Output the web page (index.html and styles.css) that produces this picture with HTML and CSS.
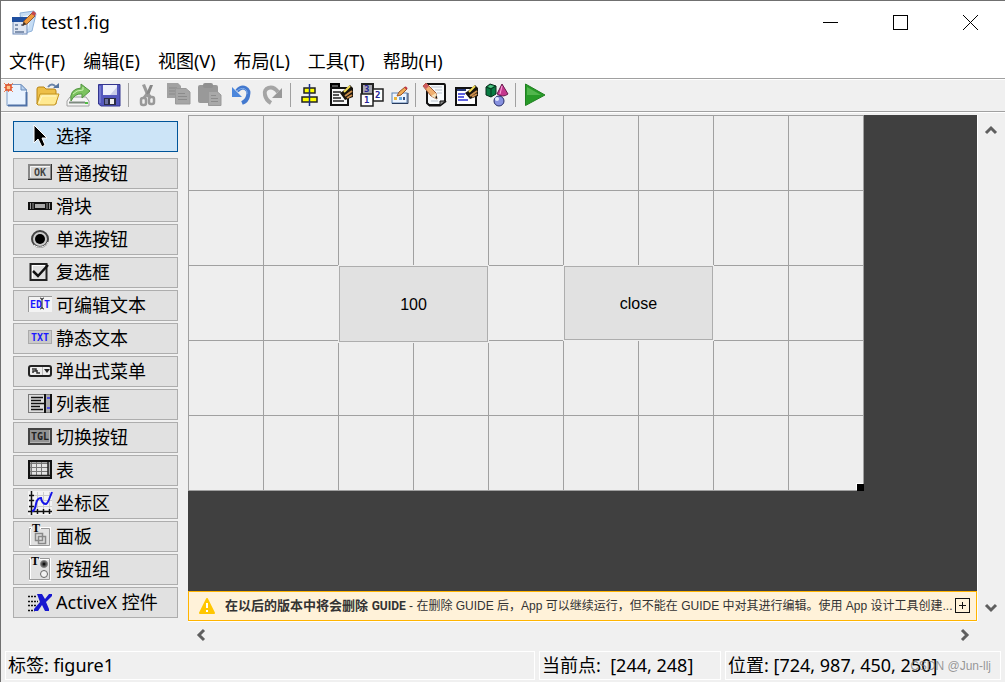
FILE: index.html
```html
<!DOCTYPE html>
<html lang="zh-CN">
<head>
<meta charset="utf-8">
<title>test1.fig</title>
<link rel="stylesheet" href="styles.css">
</head>
<body>
<div class="window">
  <header class="titlebar">
    <svg class="app-icon" width="24" height="24" viewBox="0 0 24 24" aria-hidden="true">
      <path d="M8 2L22 0L24 3L20 20L10 23Z" fill="#c5dcf4" stroke="#8fb2da"/>
      <path d="M11 5L19 4L16 18L10 19Z" fill="#eef6ff"/>
      <rect x="1" y="7" width="14" height="16" fill="#dfe6f2" stroke="#6f8bb8"/>
      <rect x="0" y="6" width="16" height="5" fill="#1f4f9f"/>
      <path d="M3 14H6M3 18H6M9 14H12M3 21H12" stroke="#8294b0" stroke-width="2"/>
      <path d="M11 14L12 10L20 2L23 5L15 13Z" fill="#ef9a3e" stroke="#8d5a35"/>
      <path d="M19 3L21 0L24 2L23 5Z" fill="#c4474d"/>
      <path d="M10 15L12 11L14 13Z" fill="#3b302b"/>
    </svg>
    <h1 class="title">test1.fig</h1>
    <div class="window-controls">
      <button class="window-button" aria-label="最小化"><svg width="15" height="15" viewBox="0 0 15 15"><path d="M0 7.5H15" stroke="#000"/></svg></button>
      <button class="window-button" aria-label="最大化"><svg width="15" height="15" viewBox="0 0 15 15"><rect x=".5" y=".5" width="14" height="14" fill="none" stroke="#000"/></svg></button>
      <button class="window-button" aria-label="关闭"><svg width="15" height="15" viewBox="0 0 15 15"><path d="M0 0L15 15M15 0L0 15" stroke="#000"/></svg></button>
    </div>
  </header>

  <nav class="menubar">
    <button class="menu">文件(F)</button>
    <button class="menu">编辑(E)</button>
    <button class="menu">视图(V)</button>
    <button class="menu">布局(L)</button>
    <button class="menu">工具(T)</button>
    <button class="menu">帮助(H)</button>
  </nav>

  <div class="toolbar" role="toolbar" aria-label="工具栏">
    <div class="tool-group">
      <button class="tool" aria-label="新建"><svg width="24" height="24" viewBox="0 0 24 24">
        <path d="M2 1.500H16L21.500 7V22.500H2Z" fill="#e9f3ff" stroke="#7d9cc6"/><path d="M16 1.500V7H21.500Z" fill="#b9d2f0" stroke="#6d8dba"/>
        <path d="M21.500 9V22.500H3" fill="none" stroke="#4f71a6" stroke-width="2"/>
        <path d="M-1 0L8 9M8 0L-1 9M3.500 0V9M-1 4.500H8" stroke="#ef7d52"/><rect x="1" y="2" width="5" height="5" fill="#ffc48a" stroke="#df4f28" stroke-width="1.500"/></svg></button>
      <button class="tool" aria-label="打开"><svg width="24" height="24" viewBox="0 0 24 24">
        <path d="M1 21V6Q1 4 3 4H8L10 6H18Q20 6 20 8V21Z" fill="#edbf48" stroke="#b98514"/>
        <path d="M1 21L4 11H23L20 20Q19.500 22 18 22H2Z" fill="#ffe991" stroke="#c39320"/>
        <path d="M3 20L6 13H20" fill="none" stroke="#fff7c9"/>
        <path d="M12 4Q16 -1 20 4" fill="none" stroke="#6b86ab" stroke-width="2"/><path d="M17 5H23V0Z" fill="#56759f"/></svg></button>
      <button class="tool" aria-label="导出"><svg width="24" height="24" viewBox="0 0 24 24">
        <path d="M3 14L0 18V23H22V18L19 14Z" fill="#f5f5f5" stroke="#a0a0a0"/><path d="M2 19.500H18" stroke="#7e8b80" stroke-width="2"/><rect x="18" y="19" width="3" height="2" fill="#51bd45"/>
        <path d="M4 18Q2 6 14 5V1L23 8L15 15V11Q8 10 4 18Z" fill="#7cc35f" stroke="#529542"/><path d="M6 11Q9 7 16 7V4" fill="none" stroke="#cdf2b5"/></svg></button>
      <button class="tool" aria-label="保存"><svg width="24" height="24" viewBox="0 0 24 24">
        <path d="M.500 1.500H22V23H3L.500 21Z" fill="#5458bd" stroke="#33358e"/><path d="M2 3V20" stroke="#9298e4"/>
        <rect x="5" y="2" width="14" height="10" fill="#eef0fb"/><path d="M12 12L19 4V12Z" fill="#c8cce9"/>
        <rect x="6" y="15" width="12" height="7" fill="#2b2d45"/><rect x="12" y="16" width="4" height="5" fill="#f1f1f1"/><rect x="7" y="16" width="3" height="5" fill="#6c71a0"/></svg></button>
    </div>
    <div class="tool-group">
      <button class="tool" aria-label="剪切"><svg width="24" height="24" viewBox="0 0 24 24">
        <path d="M6 2L9 1L13 11L11 14Z" fill="#9a9a9a"/><path d="M17 2L14 2L10 11L12 15Z" fill="#878787"/>
        <path d="M11 11L8 15M12 11L15 15" stroke="#9a9a9a" stroke-width="3"/>
        <rect x="5" y="15" width="5" height="7" rx="2" fill="none" stroke="#999" stroke-width="2.500"/><rect x="13" y="14" width="5" height="7" rx="2" fill="none" stroke="#999" stroke-width="2.500"/></svg></button>
      <button class="tool" aria-label="复制"><svg width="24" height="24" viewBox="0 0 24 24">
        <path d="M0 0H11L14 3V15H0Z" fill="#a2a2a2"/><path d="M2 5H10M2 8H9M2 11H8" stroke="#8a8a8a"/>
        <path d="M8.500 5.500H19L23 9V21H8.500Z" fill="#a6a6a6" stroke="#999"/><path d="M11 10.500H18M11 13.500H20M11 16.500H20" stroke="#8c8c8c"/></svg></button>
      <button class="tool" aria-label="粘贴"><svg width="24" height="24" viewBox="0 0 24 24">
        <rect x="0" y="2" width="20" height="18" rx="2" fill="#999"/><rect x="5" y="0" width="10" height="5" rx="2" fill="#909090"/>
        <path d="M10.500 8.500H19L23 12V22.500H10.500Z" fill="#a9a9a9" stroke="#999"/><path d="M13 12.500H18M13 15.500H20M13 18.500H20" stroke="#8c8c8c"/></svg></button>
      <button class="tool" aria-label="撤销"><svg width="24" height="24" viewBox="0 0 24 24">
        <path d="M8 8C14 1 21 6 19 13Q18 18 13 20" fill="none" stroke="#4379cf" stroke-width="4"/><path d="M3 4V14H13Z" fill="#4d87dc"/><path d="M8 8C13 3 19 6 18 11" fill="none" stroke="#83aeea"/></svg></button>
      <button class="tool" aria-label="重做"><svg width="24" height="24" viewBox="0 0 24 24">
        <path d="M18 9C12 1 3 5 5 12Q6 17 11 20" fill="none" stroke="#a5a5a5" stroke-width="4"/><path d="M22 5V15H12Z" fill="#999"/></svg></button>
    </div>
    <div class="tool-group">
      <button class="tool" aria-label="对齐对象"><svg width="24" height="24" viewBox="0 0 24 24">
        <rect x="6" y="5" width="11" height="5" fill="#ff0" stroke="#222" stroke-width="1.500"/><rect x="4" y="14" width="15" height="5" fill="#ff0" stroke="#222" stroke-width="1.500"/><path d="M11.500 1V23" stroke="#142e8c" stroke-width="1.500"/></svg></button>
      <button class="tool" aria-label="菜单编辑器"><svg width="24" height="24" viewBox="0 0 24 24">
        <rect x="2" y="1" width="8" height="4" fill="#555" stroke="#000" stroke-width="2"/><rect x="2" y="5" width="17" height="17" fill="#f8f8f8" stroke="#111" stroke-width="2"/>
        <path d="M4 9H12M4 12H10M4 15H12M4 18H15" stroke="#222" stroke-width="1.500"/>
        <path d="M11 10L14 8L21 2L24 5V14L16 17Z" fill="#17120b"/><path d="M15 9L21 3" stroke="#f4dd58" stroke-width="2"/><path d="M16 13L23 8M18 15L23 12" stroke="#c98d4c" stroke-width="2"/></svg></button>
      <button class="tool" aria-label="Tab 键顺序编辑器"><svg width="24" height="24" viewBox="0 0 24 24">
        <rect x="2" y="1" width="11" height="12" fill="#a8a8b0" stroke="#222" stroke-width="2"/><rect x="13" y="6" width="10" height="12" fill="#fff" stroke="#222" stroke-width="1.500"/><rect x="1" y="11" width="12" height="12" fill="#fff" stroke="#222" stroke-width="1.500"/>
        <text class="digit" x="4" y="9">3</text><text class="digit" x="15" y="15">2</text><text class="digit" x="4" y="20">1</text></svg></button>
      <button class="tool tool-small" aria-label="工具栏编辑器"><svg width="18" height="24" viewBox="0 0 18 24">
        <rect x="1" y="10" width="15" height="10" fill="#edf5ff" stroke="#5c83b3"/><path d="M1 20.500H17V10" fill="none" stroke="#283b5d"/>
        <rect x="3" y="14" width="3" height="3" fill="#eab63b"/><rect x="8" y="14" width="3" height="3" fill="#68aadf"/><rect x="12" y="14" width="2" height="3" fill="#355486"/>
        <path d="M6 13L8 9L14 4L16 6L10 12Z" fill="#f1ad56" stroke="#9b5528"/><path d="M14 4L16 6" stroke="#bf3445" stroke-width="2"/></svg></button>
    </div>
    <div class="tool-group">
      <button class="tool" aria-label="编辑器"><svg width="24" height="24" viewBox="0 0 24 24">
        <path d="M4 1H21Q22 1 22 3V18L17 22H6L4 20Z" fill="#f7fafc" stroke="#111" stroke-width="2"/><path d="M6 22.500H17L23 18" fill="none" stroke="#111" stroke-width="2"/><path d="M17 22V18H22" fill="#888" stroke="#111"/><path d="M8 4H19M12 7H19M14 10H19M8 18H15" stroke="#bbc5cf"/>
        <path d="M0 3L3 0L13 10L14 16L8 13Z" fill="#f0b070" stroke="#a05c3a"/><path d="M0 3L3 0L6 3L3 6Z" fill="#cf5b60"/><path d="M8 13L13 10L14 16Z" fill="#f6e3bd"/><path d="M12 14L14 13V16Z" fill="#111"/></svg></button>
      <button class="tool" aria-label="属性检查器"><svg width="24" height="24" viewBox="0 0 24 24">
        <rect x="2" y="5" width="20" height="17" fill="#fff" stroke="#111" stroke-width="2"/><path d="M3 7H12" stroke="#26387a" stroke-width="2"/>
        <path d="M4 11H11M4 14H10M4 17H14" stroke="#2e32d5" stroke-width="1.500"/>
        <path d="M11 10L14 8L21 2L24 5V13L16 16Z" fill="#17120b"/><path d="M15 9L21 3" stroke="#f4dd58" stroke-width="2"/><path d="M16 13L23 8M18 14L23 11" stroke="#c98d4c" stroke-width="2"/></svg></button>
      <button class="tool" aria-label="对象浏览器"><svg width="24" height="24" viewBox="0 0 24 24">
        <path d="M1 4L5 1L11 3V11L6 14L1 12Z" fill="#087b42" stroke="#092e1d"/><path d="M1 4L6 6L11 3M6 6V14" fill="none" stroke="#07361e"/><path d="M3 4L5 2L9 3L6 5Z" fill="#54c785"/>
        <path d="M17 1L23 11Q18 15 12 11Z" fill="#c5388e" stroke="#66194c"/><path d="M17 3L15 11" stroke="#ffa3dc"/>
        <circle cx="14" cy="18" r="5" fill="#8791df" stroke="#252b69"/><circle cx="12" cy="16" r="2" fill="#e4e8ff"/></svg></button>
    </div>
    <div class="tool-group">
      <button class="tool" aria-label="运行"><svg width="24" height="24" viewBox="0 0 24 24">
        <path d="M2.500 1L22 12L2.500 22.500Z" fill="#279b28" stroke="#218022"/><path d="M4 4L18 12H4Z" fill="#51b64d"/></svg></button>
    </div>
  </div>

  <main class="workspace">
    <aside class="palette" aria-label="组件选项板">
      <button class="component selected" aria-pressed="true"><svg class="component-icon" viewBox="0 0 24 25"><path d="M6 1V19L10 15L14 23L17 21L14 14H19Z" fill="#000" stroke="#fff"/></svg>选择</button>
      <button class="component"><svg class="component-icon" viewBox="0 0 24 25"><rect x="1" y="4" width="22" height="14" fill="#d5d5d5" stroke="#888" stroke-width="2"/><path d="M2.500 16V5.500H22" fill="none" stroke="#f5f5f5"/><path d="M0 18.500H23.500V3" fill="none" stroke="#333"/><text class="icon-label gray" x="6" y="15">OK</text></svg>普通按钮</button>
      <button class="component"><svg class="component-icon" viewBox="0 0 24 25"><rect x="0" y="8" width="24" height="8" fill="#111"/><rect x="7" y="10" width="10" height="4" fill="#aaa"/><path d="M2.500 9V15M5 9V15M19 9V15M21.500 9V15" stroke="#999"/></svg>滑块</button>
      <button class="component"><svg class="component-icon" viewBox="0 0 24 25"><circle cx="12" cy="12" r="8" fill="#ccc" stroke="#444" stroke-width="2"/><path d="M6 18A9 9 0 0 0 20 15" fill="none" stroke="#fff"/><circle cx="12" cy="12" r="5" fill="#000"/></svg>单选按钮</button>
      <button class="component"><svg class="component-icon" viewBox="0 0 24 25"><rect x="2.500" y="4" width="16" height="16" fill="#e0e0e0" stroke="#222" stroke-width="2"/><path d="M4 5.500H17M4.500 6V18" stroke="#fff"/><path d="M5 11L10 16L20 5" fill="none" stroke="#111" stroke-width="2.500"/></svg>复选框</button>
      <button class="component"><svg class="component-icon" viewBox="0 0 24 25"><rect x="0" y="3" width="24" height="16" fill="#f3f3f3"/><path d="M.500 19V3.500H24" fill="none" stroke="#999"/><text class="icon-label blue" x="2" y="15">ED</text><text class="icon-label blue" x="16" y="15">T</text><path d="M12 5Q14 5 14 7V14Q14 16 12 16M16 5Q14 5 14 7M14 14Q14 16 16 16" fill="none" stroke="#222"/></svg>可编辑文本</button>
      <button class="component"><svg class="component-icon" viewBox="0 0 24 25"><rect x=".500" y="4.500" width="23" height="13" fill="#c9c9c9" stroke="#aaa"/><text class="icon-label blue" x="3" y="15">TXT</text></svg>静态文本</button>
      <button class="component"><svg class="component-icon" viewBox="0 0 24 25"><rect x="1" y="7" width="22" height="10" rx="2" fill="#eee" stroke="#222" stroke-width="2"/><path d="M4 10H8V12H5V14M9 11V14H12" fill="none" stroke="#333" stroke-width="1.500"/><path d="M14.500 8V16" stroke="#bbb"/><path d="M16 10H22L19 14Z" fill="#222"/></svg>弹出式菜单</button>
      <button class="component"><svg class="component-icon" viewBox="0 0 24 25"><rect x=".500" y="2.500" width="23" height="18" fill="#ddd" stroke="#777"/><path d="M3 5.500H15M3 8.500H13M3 11.500H16M3 14.500H12M3 17.500H15" stroke="#111" stroke-width="1.500"/><path d="M17 2V21M23 2V21" stroke="#111" stroke-width="2"/><rect x="18" y="3" width="4" height="17" fill="#aaa"/><path d="M19 6H22M19 16H22" stroke="#33e" stroke-width="1.500"/></svg>列表框</button>
      <button class="component"><svg class="component-icon" viewBox="0 0 24 25"><rect x="1" y="4" width="22" height="15" fill="#929292" stroke="#444" stroke-width="2"/><path d="M2 17.500H21.500V5" fill="none" stroke="#b5b5b5"/><text class="icon-label dark" x="3" y="15">TGL</text></svg>切换按钮</button>
      <button class="component"><svg class="component-icon" viewBox="0 0 24 25"><rect x="1" y="3" width="22" height="17" fill="#aaa" stroke="#111" stroke-width="2"/><rect x="3" y="5" width="17" height="12" fill="#e4e4e4"/><path d="M3.500 4V17M8.500 4V17M13.500 4V17M2 5.500H20M2 9.500H20M2 13.500H20" stroke="#777"/><path d="M20 4V18M2 17.500H22" stroke="#222" stroke-width="1.500"/></svg>表</button>
      <button class="component"><svg class="component-icon" viewBox="0 0 24 25"><rect width="24" height="24" fill="#f3f3f3"/><path d="M9.500 1V20M15.500 1V20M21.500 1V20M5 4.500H24M5 9.500H24M5 15.500H24" stroke="#ccc"/><path d="M3.500 0V24M0 20.500H24M1 4.500H6M1 9.500H6M1 15.500H6M9.500 18V23M15.500 18V23M21.500 18V23" stroke="#111" stroke-width="1.500"/><path d="M4 20Q7 20 8 13Q9 7 13 7Q14 13 18 13Q20 12 22 6L24 1" fill="none" stroke="#1515e8" stroke-width="2"/></svg>坐标区</button>
      <button class="component"><svg class="component-icon" viewBox="0 0 24 25"><rect x="2" y="4" width="20" height="19" fill="none" stroke="#fff" stroke-width="2"/><path d="M3 4.500H1.500V21.500H21.500V4.500H13" fill="none" stroke="#999"/><rect x="4" y="0" width="8" height="9" fill="#e1e1e1"/><text class="icon-serif" x="4" y="8">T</text><path d="M7.500 9.500H14.500V16.500H7.500ZM10.500 12.500H17.500V19.500H10.500Z" fill="none" stroke="#888" stroke-width="1.500"/></svg>面板</button>
      <button class="component"><svg class="component-icon" viewBox="0 0 24 25"><rect x="2" y="2" width="20" height="21" fill="none" stroke="#fff" stroke-width="2"/><path d="M2 2.500H1.500V22.500H21.500V1.500H12" fill="none" stroke="#999"/><rect x="3" y="0" width="8" height="9" fill="#e1e1e1"/><text class="icon-serif" x="3" y="8">T</text><circle cx="16" cy="7" r="3.500" fill="#555" stroke="#888"/><circle cx="16" cy="7" r="1.500" fill="#111"/><circle cx="16" cy="17" r="3.500" fill="#f2f2f2" stroke="#666"/></svg>按钮组</button>
      <button class="component"><svg class="component-icon" viewBox="0 0 24 25"><path d="M0 6.500H9M0 11.500H10M0 15.500H8M0 20.500H7" stroke="#111" stroke-width="1.500" stroke-dasharray="2 1"/><path d="M9 4H14L17 9L21 4H24V6L18 12L21 19V21H17L14 15L10 21H6V19L12 12Z" fill="#1717cf"/></svg>ActiveX 控件</button>
    </aside>

    <section class="editor">
      <div class="viewport">
        <div class="figure">
          <button class="ui-control control-value">100</button>
          <button class="ui-control control-close">close</button>
          <span class="resize-handle"></span>
        </div>
      </div>
      <div class="notice" role="status">
        <svg class="warning" width="16" height="16" viewBox="0 0 16 16" aria-hidden="true"><path d="M8 1L15 15H1Z" fill="#ffc600" stroke="#ffc600" stroke-width="2" stroke-linejoin="round"/><path d="M8 5V10M8 12V14" stroke="#fff" stroke-width="2"/></svg>
        <p class="notice-text"><strong>在以后的版本中将会删除 <span class="product">GUIDE</span></strong> - 在删除 GUIDE 后，App 可以继续运行，但不能在 GUIDE 中对其进行编辑。使用 App 设计工具创建...</p>
        <button class="expand" aria-label="展开"><svg width="15" height="15" viewBox="0 0 15 15"><rect x=".5" y=".5" width="14" height="14" fill="none" stroke="#111"/><path d="M4 7.500H11M7.500 4V11" stroke="#111"/></svg></button>
      </div>
      <div class="scroll scroll-vertical">
        <button class="scroll-button" aria-label="向上滚动"><svg width="12" height="12" viewBox="0 0 12 12"><path d="M1 9L6 4L11 9" fill="none" stroke="#5f5f5f" stroke-width="3"/></svg></button>
        <button class="scroll-button" aria-label="向下滚动"><svg width="12" height="12" viewBox="0 0 12 12"><path d="M1 3L6 8L11 3" fill="none" stroke="#5f5f5f" stroke-width="3"/></svg></button>
      </div>
      <div class="scroll scroll-horizontal">
        <button class="scroll-button" aria-label="向左滚动"><svg width="12" height="12" viewBox="0 0 12 12"><path d="M9 1L4 6L9 11" fill="none" stroke="#5f5f5f" stroke-width="3"/></svg></button>
        <button class="scroll-button" aria-label="向右滚动"><svg width="12" height="12" viewBox="0 0 12 12"><path d="M3 1L8 6L3 11" fill="none" stroke="#5f5f5f" stroke-width="3"/></svg></button>
      </div>
    </section>
  </main>

  <footer class="statusbar">
    <div class="status status-tag">标签: figure1</div>
    <div class="status status-point">当前点:&nbsp; [244, 248]</div>
    <div class="status status-position">位置: [724, 987, 450, 250]</div>
    <span class="watermark">CSDN @Jun-llj</span>
  </footer>
</div>
</body>
</html>
```

FILE: styles.css
```css
* { box-sizing: border-box; }

body {
  margin: 0;
  color: #000;
  font: 18px/24px "Noto Sans", "Noto Sans CJK SC", sans-serif;
}

button {
  padding: 0;
  border: 0;
  background: none;
  color: inherit;
  font: inherit;
}

svg { display: block; overflow: visible; flex: none; }

.window {
  display: flex;
  flex-direction: column;
  min-height: 100vh;
  border: solid #707070;
  border-width: 1px 0 0 1px;
  background: #f0f0f0;
}

.titlebar {
  display: flex;
  align-items: center;
  gap: 5px;
  height: 43px;
  padding-left: 11px;
  background: #fff;
}

.title { margin: 0; padding-bottom: 2px; font-size: 18px; font-weight: 400; }
.window-controls { display: flex; margin-left: auto; }
.window-button { display: grid; place-items: center; width: 70px; height: 43px; }

.menubar {
  display: flex;
  align-items: center;
  gap: 18px;
  height: 35px;
  padding-left: 8px;
  border-bottom: 1px solid #a0a0a0;
  background: #fff;
}

.menu { white-space: nowrap; }

.toolbar {
  display: flex;
  gap: 6px;
  padding: 3px 4px 4px;
  border-top: 1px solid #fff;
  border-bottom: 1px solid #a0a0a0;
}

.tool-group { display: flex; gap: 7px; }
.tool-group + .tool-group { padding-left: 7px; border-left: 1px solid #a0a0a0; }
.tool { width: 24px; height: 24px; }
.tool-small { width: 18px; }
.digit { fill: #23239a; font: bold 9px "DejaVu Sans Mono", monospace; }

.workspace {
  display: flex;
  flex: 1;
  padding-top: 2px;
  border-top: 1px solid #fff;
}

.palette {
  display: flex;
  flex: none;
  flex-direction: column;
  gap: 2px;
  width: 187px;
  padding: 6px 10px 0 12px;
}

.component {
  display: flex;
  align-items: center;
  gap: 4px;
  height: 31px;
  padding: 0 0 2px 14px;
  border: 1px solid #adadad;
  background: #e1e1e1;
  white-space: nowrap;
}

.component.selected {
  margin-bottom: 4px;
  border-color: #005499;
  background: #cce4f7;
}

.component-icon { width: 24px; height: 25px; margin-top: 2px; }
.icon-label { font: bold 10px "DejaVu Sans Mono", monospace; }
.gray { fill: #444; }
.blue { fill: #1a1aff; }
.dark { fill: #222; }
.icon-serif { font: bold 12px "Liberation Serif", serif; }

.editor {
  display: grid;
  flex: 1;
  grid-template: 1fr 30px 30px / minmax(0, 1fr) 28px;
  min-width: 0;
}

.viewport { overflow: hidden; background: #404040; }

.figure {
  position: relative;
  width: 676px;
  height: 376px;
  background:
    linear-gradient(#a0a0a0 1px, transparent 1px) 0 0 / 75px 75px,
    linear-gradient(90deg, #a0a0a0 1px, transparent 1px) 0 0 / 75px 75px,
    #eee;
}

.ui-control {
  position: absolute;
  top: 151px;
  width: 149px;
  padding-top: 2px;
  border: 1px solid #adadad;
  background: #e1e1e1;
  box-shadow: 0 0 0 1px #eee;
  font: 16px/20px "Liberation Sans", sans-serif;
}

.control-value { left: 151px; height: 76px; }
.control-close { left: 376px; height: 74px; }

.resize-handle {
  position: absolute;
  right: 0;
  bottom: 0;
  width: 7px;
  height: 7px;
  background: #000;
  box-shadow: -1px -1px #fff;
}

.notice {
  display: flex;
  align-items: center;
  grid-row: 2;
  padding: 0 6px 2px 10px;
  border: 1px solid #ffb400;
  background: #fff2d9;
  color: #333;
  font: 12px/18px "Liberation Sans", "Noto Sans CJK SC", sans-serif;
}

.warning { margin-top: 2px; }

.notice-text {
  flex: 1;
  min-width: 0;
  margin: 2px 2px 0 10px;
  overflow: hidden;
  white-space: nowrap;
}

.notice-text strong { font-size: 13px; }
.product { font: bold 12px Roboto, sans-serif; }

.scroll { display: flex; justify-content: space-between; }
.scroll-button { display: grid; place-items: center; width: 25px; height: 26px; }

.scroll-vertical {
  grid-area: 1 / 2 / 3 / 3;
  flex-direction: column;
  padding-top: 2px;
  border-left: 1px solid #fff;
}

.scroll-horizontal { grid-row: 3; border-top: 1px solid #fff; }

.statusbar {
  position: relative;
  display: flex;
  gap: 4px;
  padding: 0 4px 2px;
}

.status {
  height: 29px;
  padding: 1px 2px;
  border: 1px solid #fff;
  white-space: nowrap;
}

.status-tag { flex: 1; }
.status-point { width: 182px; }
.status-position { width: 276px; }

.watermark {
  position: absolute;
  right: 14px;
  bottom: 7px;
  color: rgba(120, 120, 120, 0.75);
  font: 12px/18px "Liberation Sans", sans-serif;
}
```
